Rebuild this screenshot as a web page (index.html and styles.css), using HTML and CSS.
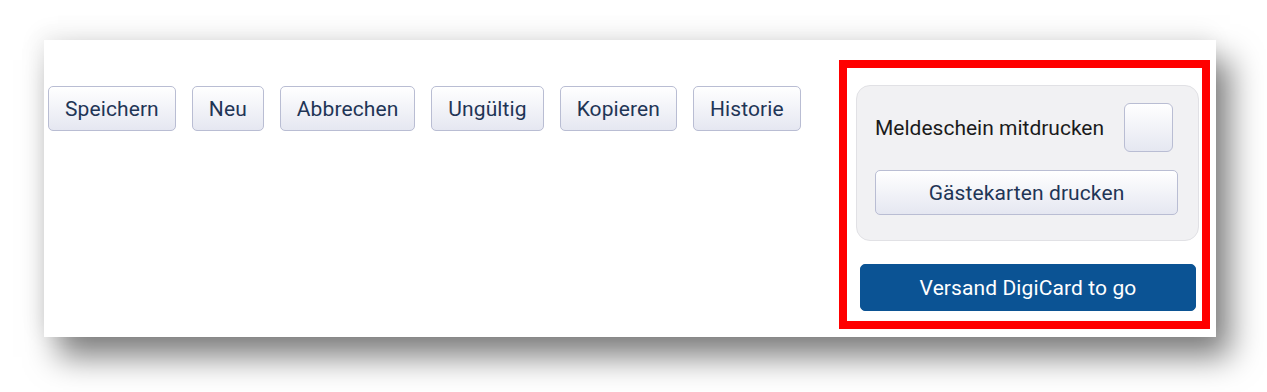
FILE: index.html
```html
<!DOCTYPE html>
<html lang="de">
<head>
    <meta charset="UTF-8">
    <link rel="stylesheet" href="styles.css">
    <title>Meldeschein</title>
</head>
<body>
    <main class="sheet">
        <div class="toolbar">
            <button class="btn">Speichern</button>
            <button class="btn">Neu</button>
            <button class="btn">Abbrechen</button>
            <button class="btn">Ungültig</button>
            <button class="btn">Kopieren</button>
            <button class="btn">Historie</button>
        </div>

        <div class="print-area">
            <div class="print-box">
                <label class="print-row">
                    <span>Meldeschein mitdrucken</span>
                    <span class="check"></span>
                </label>
                <button class="btn wide">Gästekarten drucken</button>
            </div>
            <button class="btn primary">Versand DigiCard to go</button>
        </div>
    </main>
</body>
</html>
```

FILE: styles.css
```css
*{
    margin: 0;
    padding: 0;
    box-sizing: border-box;
}
html{
    font-family: Roboto, "Liberation Sans", Arial, sans-serif;
    background: #fff;
}
body{
    min-height: 392px;
    padding: 40px 51px 0 44px;
}

.sheet{
    height: 297px;
    background: #fff;
    display: flex;
    justify-content: space-between;
    align-items: flex-start;
    box-shadow: 14px 20px 30px rgba(0, 0, 0, .5), -4px -6px 22px rgba(0, 0, 0, .07);
}

.toolbar{
    display: flex;
    gap: 16px;
    margin: 46px 0 0 4px;
}

.btn{
    font-family: inherit;
    font-size: 21px;
    letter-spacing: .1px;
    color: #1f3556;
    height: 45px;
    padding: 0 16px;
    border: 1px solid #b9bdd3;
    border-radius: 5px;
    background: linear-gradient(#ffffff, #e5e7f1);
    cursor: pointer;
}

.print-area{
    width: 371px;
    height: 269px;
    margin: 20px 6px 0 0;
    border: 8px solid #ff0000;
    padding: 17px 3px 0 9px;
}

.print-box{
    height: 156px;
    background: #f1f1f3;
    border: 1px solid #e1e1e5;
    border-radius: 14px;
    padding: 17px 25px 0 18px;
}

.print-row{
    display: flex;
    align-items: center;
    justify-content: space-between;
    font-size: 21px;
    color: #1b1b1b;
}
.check{
    width: 49px;
    height: 49px;
    border: 1px solid #b9bdd3;
    border-radius: 6px;
    background: linear-gradient(#ffffff, #e5e7f1);
}

.btn.wide{
    width: 303px;
    margin-top: 18px;
}

.btn.primary{
    display: block;
    width: 336px;
    height: 47px;
    margin: 23px 0 0 4px;
    background: #0b5394;
    border-color: #0b5394;
    color: #fff;
}
```
